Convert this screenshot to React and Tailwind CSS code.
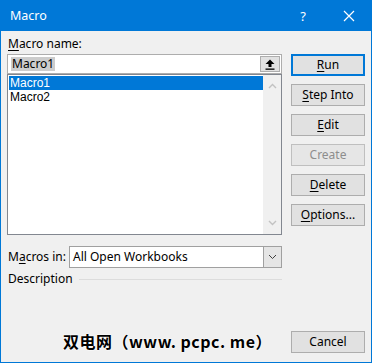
import React from 'react';

const font = { fontFamily: '"Noto Sans", "Liberation Sans", sans-serif' };

const Btn = ({ children, primary, disabled }) => (
  <div
    className={
      'flex h-[22px] w-[74px] items-center justify-center text-[12px] ' +
      (primary
        ? 'border-2 border-[#0078d7] bg-[#e1e1e1] text-black'
        : disabled
        ? 'border border-[#bfbfbf] bg-[#e6e6e6] text-[#8d8d8d]'
        : 'border border-[#adadad] bg-[#e1e1e1] text-black')
    }
  >
    {children}
  </div>
);

const U = ({ children }) => <span className="underline underline-offset-2">{children}</span>;

export default function App() {
  return (
    <div
      className="flex h-[363px] w-[372px] flex-col overflow-hidden border border-[#0078d7] bg-[#f0f0f0] leading-none text-black"
      style={font}
    >
      {/* title bar */}
      <div className="flex h-[30px] shrink-0 items-center bg-[#0078d7] pl-[9px] text-white">
        <span className="text-[12.5px]">Macro</span>
        <span className="ml-auto mr-[37px] text-[13px]">?</span>
        <svg width="12" height="12" viewBox="0 0 12 12" className="mr-[16px]">
          <path d="M1 1 L11 11 M11 1 L1 11" stroke="white" strokeWidth="1.2" />
        </svg>
      </div>

      <div className="flex flex-1 pl-[6px] pt-[7px]">
        {/* left column */}
        <div className="flex w-[275px] flex-col">
          <div className="h-[16px] pl-[1px] text-[12px]">
            <U>M</U>acro name:
          </div>
          <div className="flex h-[20px] items-center border border-[#adadad] bg-white pl-[3px] pr-[1px]">
            <span className="bg-[#cccccc] px-[1px] py-[1px] text-[12px]">Macro1</span>
            <div className="ml-auto flex h-[16px] w-[20px] items-center justify-center border border-[#adadad] bg-[#e1e1e1]">
              <svg width="10" height="11" viewBox="0 0 10 11">
                <path d="M5 0.5 L9.5 5 L6.5 5 L6.5 8 L3.5 8 L3.5 5 L0.5 5 Z" fill="black" />
                <rect x="0.5" y="9.5" width="9" height="1.3" fill="black" />
              </svg>
            </div>
          </div>
          <div className="flex h-[161px] border border-[#828790] bg-white">
            <div
              className="flex flex-1 flex-col pl-[1px] pt-[1px] text-[12px] leading-[14px]"
              style={{ fontFamily: '"Liberation Sans", sans-serif' }}
            >
              <div className="h-[14px] bg-[#0078d7] pl-[1px] text-white">Macro1</div>
              <div className="h-[14px] pl-[1px]">Macro2</div>
            </div>
            <div className="flex w-[18px] flex-col items-center justify-between bg-[#f0f0f0] py-[8px]">
              <svg width="9" height="6" viewBox="0 0 9 6">
                <path d="M1 5 L4.5 1.5 L8 5" stroke="#c2c2c2" strokeWidth="1.4" fill="none" />
              </svg>
              <svg width="9" height="6" viewBox="0 0 9 6">
                <path d="M1 1 L4.5 4.5 L8 1" stroke="#c2c2c2" strokeWidth="1.4" fill="none" />
              </svg>
            </div>
          </div>
          <div className="mt-[11px] flex h-[22px] items-center">
            <div className="w-[62px] pl-[1px] text-[12px]">
              M<U>a</U>cros in:
            </div>
            <div className="flex h-[22px] flex-1 items-center border border-[#a0a0a0] bg-white pl-[3px]">
              <span className="text-[12px]">All Open Workbooks</span>
              <div className="ml-auto flex h-full w-[18px] items-center justify-center border-l border-[#a0a0a0] bg-[#e5e5e5]">
                <svg width="9" height="6" viewBox="0 0 9 6">
                  <path d="M1 1 L4.5 4.5 L8 1" stroke="#404040" strokeWidth="1" fill="none" />
                </svg>
              </div>
            </div>
          </div>
          <div className="mt-[3px] flex h-[16px] items-center">
            <span className="pl-[1px] text-[12px]">Description</span>
            <div className="ml-[6px] h-px flex-1 bg-[#dcdcdc]"></div>
          </div>
          <div className="mt-auto mb-[13px] flex justify-center pl-[46px]">
            <span
              className="text-[16px] font-bold tracking-[0.5px] [text-shadow:0_0_2px_white,0_0_2px_white,0_0_1px_white]"
              style={{ fontFamily: '"Noto Sans CJK SC", "Noto Sans", sans-serif' }}
            >
              双电网（www. pcpc. me）
            </span>
          </div>
        </div>

        {/* right column */}
        <div className="ml-[9px] flex flex-col gap-[8px] pt-[16px] pb-[9px]">
          <Btn primary>
            <U>R</U>un
          </Btn>
          <Btn>
            <U>S</U>tep Into
          </Btn>
          <Btn>
            <U>E</U>dit
          </Btn>
          <Btn disabled>Create</Btn>
          <Btn>
            <U>D</U>elete
          </Btn>
          <Btn>
            <U>O</U>ptions...
          </Btn>
          <div className="mt-auto">
            <Btn>Cancel</Btn>
          </div>
        </div>
      </div>
    </div>
  );
}
